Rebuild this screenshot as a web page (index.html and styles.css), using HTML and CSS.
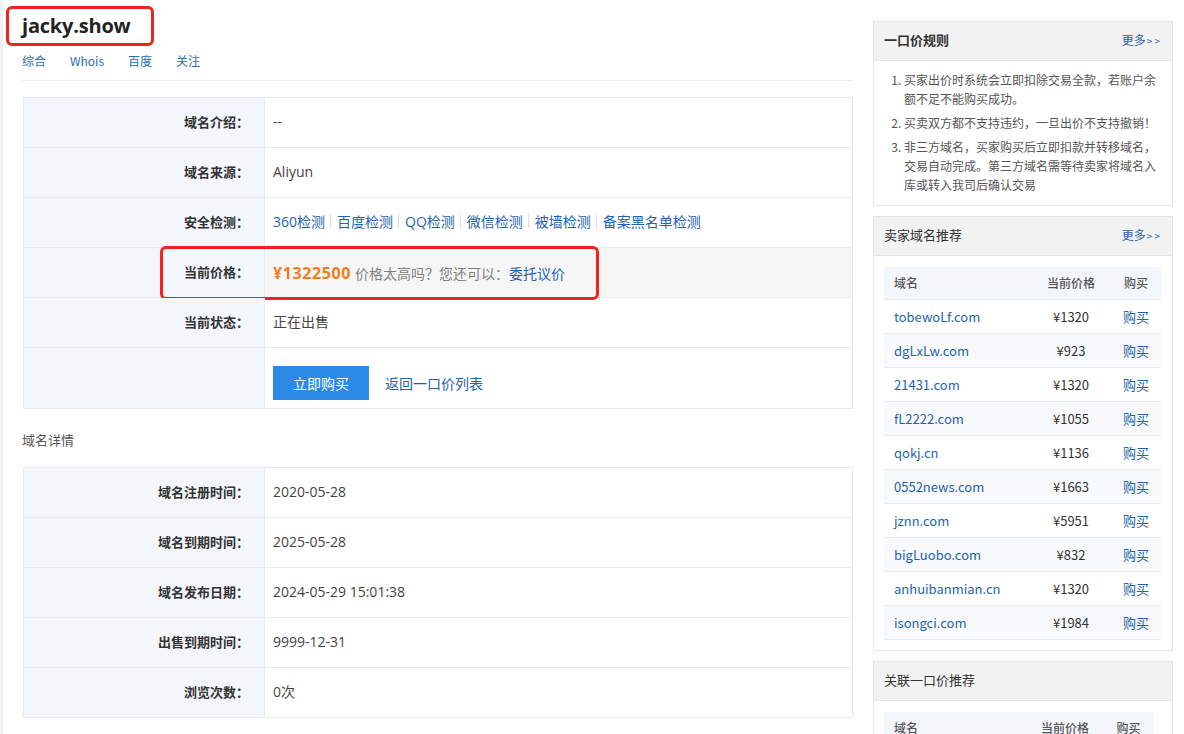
FILE: index.html
```html
<!DOCTYPE html>
<html lang="zh-CN">
<head>
<meta charset="utf-8">
<title>jacky.show</title>
<link rel="stylesheet" href="styles.css">
</head>
<body>
<div class="page">
  <div class="main">
    <div class="head">
      <h1 class="title">jacky.show</h1>
      <span class="mark mark-title"></span>
    </div>
    <div class="nav">
      <a>综合</a><a>Whois</a><a>百度</a><a>关注</a>
    </div>

    <div class="info">
      <div class="row"><div class="lab">域名介绍：</div><div class="val">--</div></div>
      <div class="row"><div class="lab">域名来源：</div><div class="val">Aliyun</div></div>
      <div class="row"><div class="lab">安全检测：</div><div class="val links">
        <a>360检测</a><i></i><a>百度检测</a><i></i><a>QQ检测</a><i></i><a>微信检测</a><i></i><a>被墙检测</a><i></i><a>备案黑名单检测</a>
      </div></div>
      <div class="row price-row"><div class="lab">当前价格：</div><div class="val hl">
        <span class="price">¥1322500</span><span class="hint">价格太高吗？您还可以：</span><a class="entrust">委托议价</a>
      </div><span class="mark mark-price"></span></div>
      <div class="row"><div class="lab">当前状态：</div><div class="val">正在出售</div></div>
      <div class="row tall"><div class="lab"></div><div class="val act">
        <button class="buy">立即购买</button><a class="back">返回一口价列表</a>
      </div></div>
    </div>

    <div class="sub">域名详情</div>
    <div class="info">
      <div class="row"><div class="lab">域名注册时间：</div><div class="val">2020-05-28</div></div>
      <div class="row"><div class="lab">域名到期时间：</div><div class="val">2025-05-28</div></div>
      <div class="row"><div class="lab">域名发布日期：</div><div class="val">2024-05-29 15:01:38</div></div>
      <div class="row"><div class="lab">出售到期时间：</div><div class="val">9999-12-31</div></div>
      <div class="row"><div class="lab">浏览次数：</div><div class="val">0次</div></div>
    </div>
  </div>

  <div class="side">
    <div class="panel">
      <div class="phead"><span class="ptitle bold">一口价规则</span><a class="more">更多<small>&gt; &gt;</small></a></div>
      <ol class="rules">
        <li>买家出价时系统会立即扣除交易全款，若账户余额不足不能购买成功。</li>
        <li>买卖双方都不支持违约，一旦出价不支持撤销！</li>
        <li>非三方域名，买家购买后立即扣款并转移域名，交易自动完成。第三方域名需等待卖家将域名入库或转入我司后确认交易</li>
      </ol>
    </div>

    <div class="panel">
      <div class="phead"><span class="ptitle">卖家域名推荐</span><a class="more">更多<small>&gt; &gt;</small></a></div>
      <div class="pbody">
        <table class="dt">
          <thead><tr><th class="c1">域名</th><th class="c2">当前价格</th><th class="c3">购买</th></tr></thead>
          <tbody>
            <tr><td class="c1"><a>tobewoLf.com</a></td><td class="c2">¥1320</td><td class="c3"><a>购买</a></td></tr>
            <tr><td class="c1"><a>dgLxLw.com</a></td><td class="c2">¥923</td><td class="c3"><a>购买</a></td></tr>
            <tr><td class="c1"><a>21431.com</a></td><td class="c2">¥1320</td><td class="c3"><a>购买</a></td></tr>
            <tr><td class="c1"><a>fL2222.com</a></td><td class="c2">¥1055</td><td class="c3"><a>购买</a></td></tr>
            <tr><td class="c1"><a>qokj.cn</a></td><td class="c2">¥1136</td><td class="c3"><a>购买</a></td></tr>
            <tr><td class="c1"><a>0552news.com</a></td><td class="c2">¥1663</td><td class="c3"><a>购买</a></td></tr>
            <tr><td class="c1"><a>jznn.com</a></td><td class="c2">¥5951</td><td class="c3"><a>购买</a></td></tr>
            <tr><td class="c1"><a>bigLuobo.com</a></td><td class="c2">¥832</td><td class="c3"><a>购买</a></td></tr>
            <tr><td class="c1"><a>anhuibanmian.cn</a></td><td class="c2">¥1320</td><td class="c3"><a>购买</a></td></tr>
            <tr><td class="c1"><a>isongci.com</a></td><td class="c2">¥1984</td><td class="c3"><a>购买</a></td></tr>
          </tbody>
        </table>
      </div>
    </div>

    <div class="panel">
      <div class="phead"><span class="ptitle">关联一口价推荐</span></div>
      <div class="pbody">
        <table class="dt narrow">
          <thead><tr><th class="c1">域名</th><th class="c2">当前价格</th><th class="c3">购买</th></tr></thead>
          <tbody>
            <tr><td class="c1"><a>jacky.top</a></td><td class="c2">¥1320</td><td class="c3"><a>购买</a></td></tr>
          </tbody>
        </table>
      </div>
    </div>
  </div>
</div>
</body>
</html>
```

FILE: styles.css
```css
* { box-sizing: border-box; }
html, body { margin: 0; padding: 0; }
body {
  background: #f0f2f5;
  font-family: "Open Sans", "Noto Sans CJK SC", sans-serif;
  color: #333;
  overflow: hidden;
  height: 734px;
}
a { color: #1f64ad; text-decoration: none; cursor: pointer; }

.page {
  margin-left: 3px;
  background: #fff;
  min-height: 734px;
  display: flex;
  align-items: flex-start;
  padding-left: 19px;
}

.main { width: 831px; padding-top: 12px; }

.head { position: relative; height: 28px; }
.title {
  margin: 0;
  font-family: "Open Sans", "Noto Sans CJK SC", sans-serif;
  font-weight: 700;
  font-size: 20px;
  line-height: 28px;
  color: #222;
  letter-spacing: -0.2px;
}
.mark {
  position: absolute;
  border: 3.5px solid #f2221a;
  border-radius: 6px;
  pointer-events: none;
}
.mark-title { left: -16px; top: -6px; width: 148px; height: 40px; }

.nav {
  margin-top: 12px;
  height: 29px;
  border-bottom: 1px solid #eeeeee;
  font-family: "Noto Sans CJK SC", sans-serif;
  font-size: 12px;
  line-height: 18px;
  display: flex;
  gap: 24px;
}
.nav a { color: #2a6db5; }

.info {
  margin-top: 16px;
  border: 1px solid #e8eaed;
  border-bottom: none;
  margin-left: 1px;
  font-family: "Noto Sans CJK SC", sans-serif;
}
.row {
  position: relative;
  display: grid;
  grid-template-columns: 241px 1fr;
  height: 50px;
  border-bottom: 1px solid #e8eaed;
}
.row.tall { height: 61px; }
.lab {
  background: #f3f6fa;
  border-right: 1px solid #e8eaed;
  text-align: right;
  padding-right: 15px;
  padding-bottom: 2px;
  font-size: 13px;
  font-weight: 700;
  color: #333;
  display: flex;
  align-items: center;
  justify-content: flex-end;
}
.val {
  padding-left: 8px;
  padding-bottom: 3px;
  font-family: "Open Sans", "Noto Sans CJK SC", sans-serif;
  font-size: 14px;
  color: #444;
  display: flex;
  align-items: center;
}
.val.hl { background: #f6f6f6; padding-bottom: 0; }
.val.act { padding-top: 10px; padding-bottom: 0; }

.links a { color: #1f64ad; }
.links i {
  display: inline-block;
  width: 1px;
  height: 14px;
  background: #dddddd;
  margin: 0 6px 0 5px;
}

.price {
  color: #f07d1d;
  font-weight: 700;
  font-size: 16px;
  letter-spacing: 0.6px;
  font-family: "Open Sans", "Noto Sans CJK SC", sans-serif;
  margin-right: 4px;
}
.hint { color: #808080; font-size: 14px; font-family: "Noto Sans CJK SC", sans-serif; }
.entrust { font-size: 14px; color: #1f64ad; font-family: "Noto Sans CJK SC", sans-serif; }
.mark-price { left: 136px; top: -2px; width: 439px; height: 54px; }

.buy {
  width: 96px;
  height: 34px;
  border: none;
  background: #2a8ae6;
  color: #fff;
  font-family: "Noto Sans CJK SC", sans-serif;
  font-size: 14px;
  padding: 0;
  margin-right: 16px;
}
.back { font-size: 14px; color: #1f64ad; }

.sub {
  margin-top: 21px;
  font-family: "Noto Sans CJK SC", sans-serif;
  font-size: 13px;
  line-height: 20px;
  color: #555;
}
.sub + .info { margin-top: 17px; }

/* sidebar */
.side {
  width: 300px;
  margin-left: 20px;
  padding-top: 21px;
  font-family: "Noto Sans CJK SC", sans-serif;
}
.panel {
  border: 1px solid #e4e6e9;
  margin-bottom: 10px;
  background: #fff;
}
.phead {
  height: 39px;
  background: #f2f2f2;
  border-bottom: 1px solid #e4e6e9;
  display: flex;
  align-items: center;
  justify-content: space-between;
  padding: 0 12px 3px 10px;
}
.ptitle { font-size: 13px; color: #333; }
.ptitle.bold { font-weight: 700; }
.more { font-size: 12px; color: #1f64ad; }
.more small { font-size: 10px; margin-left: 1px; }

.rules {
  margin: 0;
  padding: 9px 14px 11px 30px;
  font-size: 12px;
  line-height: 19px;
  color: #555;
}
.rules li { margin-bottom: 5px; padding-left: 0; }
.rules li:last-child { margin-bottom: 0; }

.pbody { padding: 11px 11px 10px 10px; }
.dt {
  width: 277px;
  border-collapse: collapse;
  font-size: 12px;
  table-layout: fixed;
}
.dt.narrow { width: 269px; }
.dt th {
  height: 32px;
  background: #f3f6fa;
  color: #555;
  font-weight: 500;
  border-bottom: 1px solid #e8eaed;
}
.dt td {
  height: 34px;
  border-bottom: 1px solid #e8eaed;
  color: #333;
  font-size: 13px;
}
.dt tbody tr:nth-child(even) td { background: #f8f9fb; }
.dt .c1 { text-align: left; padding-left: 10px; width: 147px; }
.dt .c2 { text-align: center; width: 80px; }
.dt .c3 { text-align: center; }
.dt.narrow .c1 { width: 142px; }
.dt.narrow .c2 { width: 78px; }
.dt td a { color: #1f64ad; }
```
